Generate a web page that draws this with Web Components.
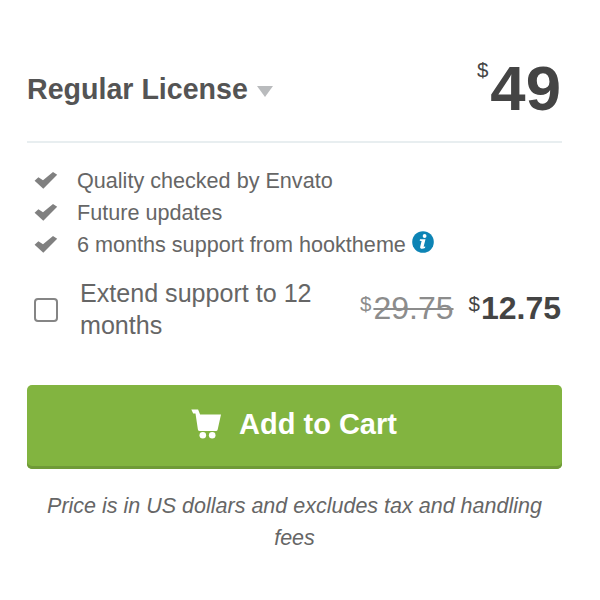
<!DOCTYPE html>
<html lang="en">
<head>
<meta charset="utf-8">
<title>Regular License</title>
<style>
  body {
    margin: 0;
    background: #fff;
    color: #666;
    font-family: "Liberation Sans", Arial, sans-serif;
  }
</style>
</head>
<body>
<purchase-card>
  <license-header slot="header" price="49">Regular License</license-header>
  <feature-item>Quality checked by Envato</feature-item>
  <feature-item>Future updates</feature-item>
  <feature-item info>6 months support from hooktheme</feature-item>
  <support-option slot="option" was="29.75" now="12.75">Extend support to 12 months</support-option>
  <cart-button slot="action">Add to Cart</cart-button>
  <span slot="note">Price is in US dollars and excludes tax and handling fees</span>
</purchase-card>

<script>
class PurchaseCard extends HTMLElement {
  constructor() {
    super();
    this.attachShadow({ mode: "open" });
  }

  connectedCallback() {
    this.shadowRoot.innerHTML = `
      <style>
        :host {
          display: flex;
          flex-direction: column;
          box-sizing: border-box;
          width: 600px;
          height: 600px;
          padding: 35px 38px 0 27px;
        }
        .features {
          display: flex;
          flex-direction: column;
          padding-top: 21px;
        }
        .note {
          padding: 21px 10px 0;
          text-align: center;
          font-size: 21.5px;
          font-style: italic;
          line-height: 32px;
        }
      </style>
      <slot name="header"></slot>
      <div class="features"><slot></slot></div>
      <slot name="option"></slot>
      <slot name="action"></slot>
      <div class="note"><slot name="note"></slot></div>
    `;
  }
}

class LicenseHeader extends HTMLElement {
  constructor() {
    super();
    this.attachShadow({ mode: "open" });
  }

  connectedCallback() {
    this.shadowRoot.innerHTML = `
      <style>
        :host {
          display: flex;
          justify-content: space-between;
          height: 106px;
          border-bottom: 2px solid #e8eef0;
          margin-bottom: 1px;
        }
        .name {
          display: flex;
          align-items: center;
          height: 108px;
          color: #545454;
          font-size: 28.6px;
          font-weight: 700;
        }
        .arrow {
          margin: 5px 0 0 9px;
          border: 8.5px solid transparent;
          border-top: 11px solid #b9bbbd;
          border-bottom: 0;
        }
        .price {
          display: flex;
          align-items: flex-start;
          padding-right: 1px;
          color: #444;
        }
        .currency {
          padding-top: 22px;
          font-size: 20.5px;
          line-height: 26px;
        }
        .amount {
          padding-left: 2px;
          padding-top: 17px;
          font-size: 63.5px;
          font-weight: 700;
          line-height: 72px;
        }
      </style>
      <div class="name"><slot></slot><i class="arrow"></i></div>
      <div class="price">
        <span class="currency">$</span>
        <span class="amount">${this.getAttribute("price")}</span>
      </div>
    `;
  }
}

class FeatureItem extends HTMLElement {
  constructor() {
    super();
    this.attachShadow({ mode: "open" });
  }

  connectedCallback() {
    this.shadowRoot.innerHTML = `
      <style>
        :host {
          display: flex;
          align-items: center;
          height: 32px;
          font-size: 21.6px;
        }
        .check {
          width: 24px;
          height: 18px;
          margin: 0 19px 0 7px;
        }
        .info {
          width: 22px;
          height: 22px;
          margin: -6px 0 0 6px;
        }
      </style>
      <svg class="check" viewBox="0 0 24 18">
        <path fill="#808080" d="M.6 8.800 4.400 5.200 9 8.300 19 0 23.200 2.800 9.300 16.700Z"/>
      </svg>
      <slot></slot>
      ${this.hasAttribute("info") ? `
      <svg class="info" viewBox="0 0 22 22">
        <circle cx="11" cy="11" r="10.8" fill="#0d84b5"/>
        <circle cx="12.6" cy="5" r="1.9" fill="#fff"/>
        <path fill="#fff" d="M8 8.300h5.500l-1.900 7.500 1.700-.4-.3 1.500c-2.200 1.200-5.400 1.200-4.800-1.200l1.400-5.800-1.900-.2Z"/>
      </svg>` : ""}
    `;
  }
}

class SupportOption extends HTMLElement {
  constructor() {
    super();
    this.attachShadow({ mode: "open" });
  }

  connectedCallback() {
    this.shadowRoot.innerHTML = `
      <style>
        :host {
          display: flex;
          align-items: center;
          height: 64px;
          padding-top: 16px;
        }
        .box {
          box-sizing: border-box;
          width: 24px;
          height: 24px;
          margin: 2px 22px 0 7px;
          border: 2px solid #858585;
          border-radius: 4px;
        }
        .label {
          width: 250px;
          font-size: 25.1px;
          line-height: 32px;
        }
        .prices {
          display: flex;
          gap: 15px;
          margin: -2px 1px 0 auto;
          font-size: 32px;
          line-height: 36px;
        }
        .price {
          display: flex;
          align-items: flex-start;
          gap: 2px;
        }
        .currency {
          font-size: 20.5px;
          line-height: 28px;
        }
        .was {
          color: #8c8c8c;
        }
        .was s {
          text-decoration-thickness: 2px;
        }
        .now {
          gap: 1px;
          color: #444;
        }
      </style>
      <span class="box"></span>
      <span class="label"><slot></slot></span>
      <div class="prices">
        <div class="price was"><span class="currency">$</span><s>${this.getAttribute("was")}</s></div>
        <div class="price now"><span class="currency">$</span><b>${this.getAttribute("now")}</b></div>
      </div>
    `;
  }
}

class CartButton extends HTMLElement {
  constructor() {
    super();
    this.attachShadow({ mode: "open" });
  }

  connectedCallback() {
    this.shadowRoot.innerHTML = `
      <style>
        :host {
          display: block;
          margin-top: 44px;
        }
        button {
          display: flex;
          align-items: center;
          justify-content: center;
          gap: 17px;
          width: 100%;
          height: 84px;
          padding: 0 1px 5px 0;
          border: 0;
          border-radius: 5px;
          background: #82b440;
          box-shadow: inset 0 -3px #6f9a37;
          color: #fff;
          font: 700 29px "Liberation Sans", Arial, sans-serif;
        }
        svg {
          width: 31px;
          height: 30px;
          margin-top: -1px;
        }
      </style>
      <button>
        <svg viewBox="0 0 31 30" fill="#fff">
          <path d="M.3.500h6.800l2 5.100H30l-3.300 14.900q-.3 1.500-1.800 1.500H8.600q-1.400 0-1.700-1.500L4.500 4.600H2.200Z"/>
          <circle cx="11.800" cy="26.200" r="3.300"/>
          <circle cx="21.200" cy="26.200" r="3.300"/>
        </svg>
        <slot></slot>
      </button>
    `;
  }
}

customElements.define("purchase-card", PurchaseCard);
customElements.define("license-header", LicenseHeader);
customElements.define("feature-item", FeatureItem);
customElements.define("support-option", SupportOption);
customElements.define("cart-button", CartButton);
</script>
</body>
</html>
